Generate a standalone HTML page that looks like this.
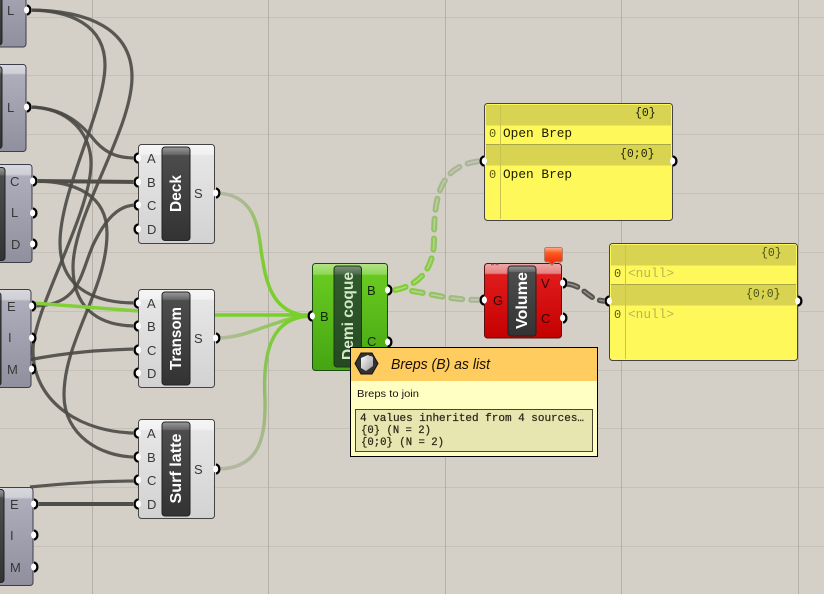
<!DOCTYPE html>
<html><head><meta charset="utf-8"><style>
html,body{margin:0;padding:0;width:824px;height:594px;overflow:hidden;background:#d4d0c8}
svg{display:block;font-family:"Liberation Sans",sans-serif}
.lb{font-size:13px;fill:#383838}
.nm{font-size:15.5px;font-weight:bold;fill:#fff;text-anchor:middle}
.mo{font-family:"Liberation Mono",monospace;font-size:12.8px;fill:#1c1c00}
.w{fill:none;stroke:#4a4944;stroke-width:3.2;opacity:.9}
.wt{fill:none;stroke:#4f4e48;stroke-width:4}
</style></head><body>
<svg width="824" height="594" viewBox="0 0 824 594" xmlns="http://www.w3.org/2000/svg">
<defs>
<linearGradient id="wh" x1="0" y1="0" x2="0" y2="1"><stop offset="0" stop-color="#f6f6f6"/><stop offset=".1" stop-color="#f1f1f1"/><stop offset=".11" stop-color="#e6e6e6"/><stop offset="1" stop-color="#d2d2d2"/></linearGradient>
<linearGradient id="gr" x1="0" y1="0" x2="0" y2="1"><stop offset="0" stop-color="#d8d8de"/><stop offset=".1" stop-color="#cfcfd6"/><stop offset=".12" stop-color="#adadbb"/><stop offset="1" stop-color="#8f8f9e"/></linearGradient>
<linearGradient id="st" x1="0" y1="0" x2="0" y2="1"><stop offset="0" stop-color="#9a9a9a"/><stop offset=".08" stop-color="#686868"/><stop offset=".09" stop-color="#4c4c4c"/><stop offset="1" stop-color="#333"/></linearGradient>
<linearGradient id="grn" x1="0" y1="0" x2="0" y2="1"><stop offset="0" stop-color="#b4e48a"/><stop offset=".1" stop-color="#8fd856"/><stop offset=".11" stop-color="#68ca20"/><stop offset="1" stop-color="#45a512"/></linearGradient>
<linearGradient id="gst" x1="0" y1="0" x2="0" y2="1"><stop offset="0" stop-color="#7d937a"/><stop offset=".08" stop-color="#4d6b4b"/><stop offset=".09" stop-color="#325a2e"/><stop offset="1" stop-color="#254a22"/></linearGradient>
<linearGradient id="red" x1="0" y1="0" x2="0" y2="1"><stop offset="0" stop-color="#efa9a9"/><stop offset=".13" stop-color="#e88080"/><stop offset=".15" stop-color="#e01b1b"/><stop offset="1" stop-color="#c40000"/></linearGradient>
<linearGradient id="bub" x1="0" y1="0" x2="0" y2="1"><stop offset="0" stop-color="#ffb090"/><stop offset=".3" stop-color="#ff5a20"/><stop offset="1" stop-color="#e82000"/></linearGradient>
<linearGradient id="w1" gradientUnits="userSpaceOnUse" x1="0" y1="193" x2="0" y2="316"><stop offset="0" stop-color="#b3b7a0"/><stop offset=".45" stop-color="#7fcc35"/><stop offset="1" stop-color="#78d02a"/></linearGradient>
<linearGradient id="w2" gradientUnits="userSpaceOnUse" x1="217" y1="0" x2="309" y2="0"><stop offset="0" stop-color="#b3b9a0"/><stop offset="1" stop-color="#7dd02f"/></linearGradient>
<linearGradient id="w3" gradientUnits="userSpaceOnUse" x1="0" y1="469" x2="0" y2="316"><stop offset="0" stop-color="#b3b7a0"/><stop offset=".5" stop-color="#93bd6a"/><stop offset="1" stop-color="#78d02a"/></linearGradient>
<linearGradient id="w4" gradientUnits="userSpaceOnUse" x1="0" y1="290" x2="0" y2="161"><stop offset="0" stop-color="#7fd02f"/><stop offset="1" stop-color="#aeb3a0"/></linearGradient>
<linearGradient id="w5" gradientUnits="userSpaceOnUse" x1="392" y1="0" x2="481" y2="0"><stop offset="0" stop-color="#7fd02f"/><stop offset="1" stop-color="#aeb3a0"/></linearGradient>
<linearGradient id="ic" x1="0" y1="0" x2="1" y2="1"><stop offset="0" stop-color="#fff"/><stop offset="1" stop-color="#999"/></linearGradient>
<g id="po"><circle r="4" fill="#fff"/><path d="M-1,-4.600 A4.800,4.800 0 0 1 -1,4.600" fill="none" stroke="#000" stroke-width="2.400"/></g>
<g id="pi"><circle r="4" fill="#fff"/><path d="M1,-4.600 A4.800,4.800 0 0 0 1,4.600" fill="none" stroke="#000" stroke-width="2.400"/></g>
</defs>
<rect width="824" height="594" fill="#d4d0c8"/>
<g stroke="#c5c1b8" stroke-width="1">
<path d="M0 17.5H824M0 75.5H824M0 134.5H824M0 193.5H824M0 252.5H824M0 311.5H824M0 370.5H824M0 428.5H824M0 487.5H824M0 546.5H824"/>
</g>
<g stroke="#b5b1a9" stroke-width="1"><path d="M92.5 0V594M268.5 0V594M445.5 0V594M621.5 0V594M798.5 0V594"/></g>

<!-- dark wires -->
<path class="w" d="M28,10 C70,10 105,25 105,65 C105,110 60,190 60,243 C60,285 90,303 136,303"/>
<path class="w" d="M28,10 C90,10 132,30 132,77 C132,130 73,215 73,267 C73,305 95,326 136,326"/>
<path class="w" d="M28,107 C65,107 82,125 96,142 C108,155 120,158 136,158"/>
<path class="w" d="M28,107 C70,107 92,135 91,165 C90,215 33,310 33,350 C33,405 85,433 136,433"/>
<path class="w" d="M34,181 C75,181 107,195 107,233 C107,290 64,340 64,395 C64,435 100,457 136,457"/>
<path class="wt" d="M34,181 L136,182"/>
<path class="w" d="M33,306 C80,306 80,275 93,245 C105,220 118,205 136,205"/>
<path class="w" d="M28,360 C70,352 100,350 136,349"/>
<path class="w" d="M30,487 C70,483 100,481 136,481"/>
<path class="wt" d="M35,504 H136"/>

<!-- green wires -->
<path d="M33,303 L138,311" fill="none" stroke="#82d038" stroke-width="3.500"/>
<path d="M217,193 C262,195 258,240 263,262 C268,295 280,314 309,316" fill="none" stroke="url(#w1)" stroke-width="3.500"/>
<path d="M217,338 C250,338 275,318 309,316" fill="none" stroke="url(#w2)" stroke-width="3.500"/>
<path d="M217,469 C258,469 266,440 265,400 C262,345 275,318 309,316" fill="none" stroke="url(#w3)" stroke-width="3.500"/>
<path d="M212,315 H309" fill="none" stroke="#78d02a" stroke-width="3.500"/>

<!-- dashed wires -->
<g fill="none" stroke-linecap="round">
<path d="M395,290 C420,285 434,268 434,240 C434,195 440,165 481,161" stroke="url(#w4)" stroke-width="6" stroke-dasharray="11 9"/>
<path d="M395,290 C420,285 434,268 434,240 C434,195 440,165 481,161" stroke="#d4dcc0" stroke-opacity=".6" stroke-width="1.500" stroke-dasharray="11 9"/>
<path d="M412,291 C432,294 450,300 481,300" stroke="url(#w5)" stroke-width="6" stroke-dasharray="11 9"/>
<path d="M412,291 C432,294 450,300 481,300" stroke="#d4dcc0" stroke-opacity=".6" stroke-width="1.500" stroke-dasharray="11 9"/>
<path d="M568,284 C585,286 588,301 606,301" stroke="#55544f" stroke-width="5.500" stroke-dasharray="10 8"/>
<path d="M568,284 C585,286 588,301 606,301" stroke="#a8a6a0" stroke-opacity=".7" stroke-width="1.500" stroke-dasharray="10 8"/>
</g>

<!-- left nodes -->
<rect x="-20" y="-40" width="46" height="87" rx="3" fill="url(#gr)" stroke="#3d3d4c"/>
<rect x="-20" y="-30" width="22" height="75" rx="3" fill="url(#st)" stroke="#222"/>
<text x="7" y="15" class="lb">L</text>
<rect x="-20" y="64.500" width="46" height="87" rx="3" fill="url(#gr)" stroke="#3d3d4c"/>
<rect x="-20" y="66.500" width="22" height="82" rx="3" fill="url(#st)" stroke="#222"/>
<text x="7" y="112" class="lb">L</text>
<rect x="-20" y="164.500" width="52" height="98" rx="3" fill="url(#gr)" stroke="#3d3d4c"/>
<rect x="-20" y="167.500" width="25" height="93" rx="3" fill="url(#st)" stroke="#222"/>
<text x="10" y="186" class="lb">C</text><text x="11" y="217" class="lb">L</text><text x="11" y="249" class="lb">D</text>
<rect x="-20" y="289.500" width="51" height="98" rx="3" fill="url(#gr)" stroke="#3d3d4c"/>
<rect x="-20" y="292.500" width="21" height="93" rx="3" fill="url(#st)" stroke="#222"/>
<text x="7" y="311" class="lb">E</text><text x="8" y="342" class="lb">I</text><text x="7" y="374" class="lb">M</text>
<rect x="-20" y="487.500" width="53" height="98" rx="3" fill="url(#gr)" stroke="#3d3d4c"/>
<rect x="-20" y="489.500" width="24" height="93" rx="3" fill="url(#st)" stroke="#222"/>
<text x="10" y="509" class="lb">E</text><text x="10" y="540" class="lb">I</text><text x="10" y="572" class="lb">M</text>

<use href="#po" x="28" y="10"/><use href="#po" x="28" y="107"/>
<use href="#po" x="34" y="181"/><use href="#po" x="34" y="213"/><use href="#po" x="34" y="244"/>
<use href="#po" x="33" y="306"/><use href="#po" x="33" y="338"/><use href="#po" x="33" y="369"/>
<use href="#po" x="35" y="504"/><use href="#po" x="35" y="535"/><use href="#po" x="35" y="567"/>

<!-- Deck -->
<rect x="138.500" y="144.500" width="76" height="99" rx="3" fill="url(#wh)" stroke="#444"/>
<rect x="162" y="147" width="28" height="93.500" rx="3" fill="url(#st)" stroke="#222"/>
<text transform="translate(181,193.500) rotate(-90)" class="nm" textLength="37" lengthAdjust="spacingAndGlyphs">Deck</text>
<text x="147" y="163" class="lb">A</text><text x="147" y="187" class="lb">B</text><text x="147" y="210" class="lb">C</text><text x="147" y="234" class="lb">D</text><text x="194" y="198" class="lb">S</text>
<use href="#pi" x="137" y="158"/><use href="#pi" x="137" y="182"/><use href="#pi" x="137" y="205"/><use href="#pi" x="137" y="229"/><use href="#po" x="217" y="193"/>

<!-- Transom -->
<rect x="138.500" y="289.500" width="76" height="98" rx="3" fill="url(#wh)" stroke="#444"/>
<rect x="162" y="292" width="28" height="93" rx="3" fill="url(#st)" stroke="#222"/>
<text transform="translate(181,338.500) rotate(-90)" class="nm" textLength="63" lengthAdjust="spacingAndGlyphs">Transom</text>
<text x="147" y="308" class="lb">A</text><text x="147" y="331" class="lb">B</text><text x="147" y="355" class="lb">C</text><text x="147" y="378" class="lb">D</text><text x="194" y="343" class="lb">S</text>
<use href="#pi" x="137" y="303"/><use href="#pi" x="137" y="326"/><use href="#pi" x="137" y="350"/><use href="#pi" x="137" y="373"/><use href="#po" x="217" y="338"/>

<!-- Surf latte -->
<rect x="138.500" y="419.500" width="76" height="99" rx="3" fill="url(#wh)" stroke="#444"/>
<rect x="162" y="422" width="28" height="94" rx="3" fill="url(#st)" stroke="#222"/>
<text transform="translate(181,468.500) rotate(-90)" class="nm" textLength="70" lengthAdjust="spacingAndGlyphs">Surf latte</text>
<text x="147" y="438" class="lb">A</text><text x="147" y="462" class="lb">B</text><text x="147" y="485" class="lb">C</text><text x="147" y="509" class="lb">D</text><text x="194" y="474" class="lb">S</text>
<use href="#pi" x="137" y="433"/><use href="#pi" x="137" y="457"/><use href="#pi" x="137" y="480"/><use href="#pi" x="137" y="504"/><use href="#po" x="217" y="469"/>

<!-- Demi coque -->
<rect x="312.500" y="263.500" width="75" height="107" rx="3" fill="url(#grn)" stroke="#1c4a12"/>
<rect x="334" y="266" width="27.500" height="101" rx="3" fill="url(#gst)" stroke="#183a14"/>
<text transform="translate(353,316) rotate(-90)" class="nm" style="fill:#d4eac8" textLength="88" lengthAdjust="spacingAndGlyphs">Demi coque</text>
<text x="320" y="321" class="lb" style="fill:#102808">B</text><text x="367" y="295" class="lb" style="fill:#102808">B</text><text x="367" y="346" class="lb" style="fill:#102808">C</text>
<use href="#pi" x="311" y="316"/><use href="#po" x="389" y="290"/><use href="#po" x="389" y="342"/>

<!-- Volume -->
<rect x="484.500" y="263.500" width="77" height="74.500" rx="3" fill="url(#red)" stroke="#5a1010"/>
<rect x="508" y="266" width="28" height="70" rx="3" fill="url(#st)" stroke="#222"/>
<text transform="translate(527,300.500) rotate(-90)" class="nm" textLength="57" lengthAdjust="spacingAndGlyphs">Volume</text>
<text x="493" y="305" class="lb" style="fill:#300">G</text><text x="541" y="288" class="lb" style="fill:#300">V</text><text x="541" y="323" class="lb" style="fill:#300">C</text>
<path d="M491,264.500h3M495.500,264.500h3" stroke="#a86060" stroke-width="1.500"/>
<path d="M544.500,249.500 a2,2 0 0 1 2,-2 h14 a2,2 0 0 1 2,2 v10.500 a2,2 0 0 1 -2,2 h-5.500 l-3,3.500 l-3,-3.500 h-2.500 a2,2 0 0 1 -2,-2 z" fill="url(#bub)" stroke="#b08070" stroke-width="1"/>
<use href="#pi" x="483" y="300"/><use href="#po" x="564" y="283"/><use href="#po" x="564" y="318"/>

<!-- Panel 1 -->
<rect x="484.500" y="103.500" width="188" height="117" rx="3" fill="#fff85a" stroke="#444"/>
<rect x="486" y="105" width="185" height="20.500" fill="#d8d452"/>
<rect x="486" y="144" width="185" height="21.500" fill="#d8d452"/><path d="M486 144.500H671" stroke="#a8a648"/>
<path d="M500.500 105V219" stroke="#c8c450"/>
<text x="635" y="116" class="mo" style="font-size:11.500px">{0}</text><text x="620" y="157" class="mo" style="font-size:11.500px">{0;0}</text>
<text x="489" y="137" class="mo" style="font-size:12px;fill:#5a5a10">0</text><text x="503" y="137" class="mo">Open Brep</text>
<text x="489" y="178" class="mo" style="font-size:12px;fill:#5a5a10">0</text><text x="503" y="178" class="mo">Open Brep</text>
<use href="#pi" x="483" y="161"/><use href="#po" x="674" y="161"/>

<!-- Panel 2 -->
<rect x="609.500" y="243.500" width="188" height="117" rx="3" fill="#fff85a" stroke="#444"/>
<rect x="611" y="245" width="185" height="20.500" fill="#d8d452"/>
<rect x="611" y="284" width="185" height="21.500" fill="#d8d452"/><path d="M611 284.500H796" stroke="#a8a648"/>
<path d="M625.500 245V359" stroke="#c8c450"/>
<text x="761" y="256" class="mo" style="font-size:11.500px;fill:#4a5210">{0}</text><text x="746" y="297" class="mo" style="font-size:11.500px;fill:#4a5210">{0;0}</text>
<text x="614" y="277" class="mo" style="font-size:12px;fill:#5a5a10">0</text><text x="628" y="277" class="mo" style="fill:#b4b45c">&lt;null&gt;</text>
<text x="614" y="318" class="mo" style="font-size:12px;fill:#5a5a10">0</text><text x="628" y="318" class="mo" style="fill:#b4b45c">&lt;null&gt;</text>
<use href="#pi" x="608" y="301"/><use href="#po" x="799" y="301"/>

<!-- Tooltip -->
<rect x="350.500" y="347.500" width="247" height="109" fill="#ffffc4" stroke="#000"/>
<rect x="351" y="348" width="246" height="33" fill="#ffcc5f"/>
<path d="M361,353 H372 L378,363.500 L372,374 H361 L355,363.500 Z" fill="#333" stroke="#111"/>
<path d="M361,358 L368,355 L373,358 L373,366 L366,371 L361,368 Z" fill="url(#ic)"/>
<ellipse cx="370" cy="358" rx="3" ry="2" fill="#ccc"/>
<text x="391" y="369" style="font-size:14.300px;font-style:italic;fill:#1a1000" textLength="99" lengthAdjust="spacingAndGlyphs">Breps (B) as list</text>
<text x="357" y="397" style="font-size:10.500px;fill:#201010" textLength="62" lengthAdjust="spacingAndGlyphs">Breps to join</text>
<rect x="355.500" y="409.500" width="237" height="42" fill="#e8e6b0" stroke="#4a4630"/>
<g fill="#302818" stroke="#302818" stroke-width=".25" style="font-family:'Liberation Mono',monospace;font-size:10.800px">
<text x="360" y="421" textLength="224" lengthAdjust="spacingAndGlyphs">4 values inherited from 4 sources…</text>
<text x="361" y="433" textLength="70" lengthAdjust="spacingAndGlyphs">{0} (N = 2)</text>
<text x="361" y="445" textLength="83" lengthAdjust="spacingAndGlyphs">{0;0} (N = 2)</text>
</g>
</svg>
</body></html>
